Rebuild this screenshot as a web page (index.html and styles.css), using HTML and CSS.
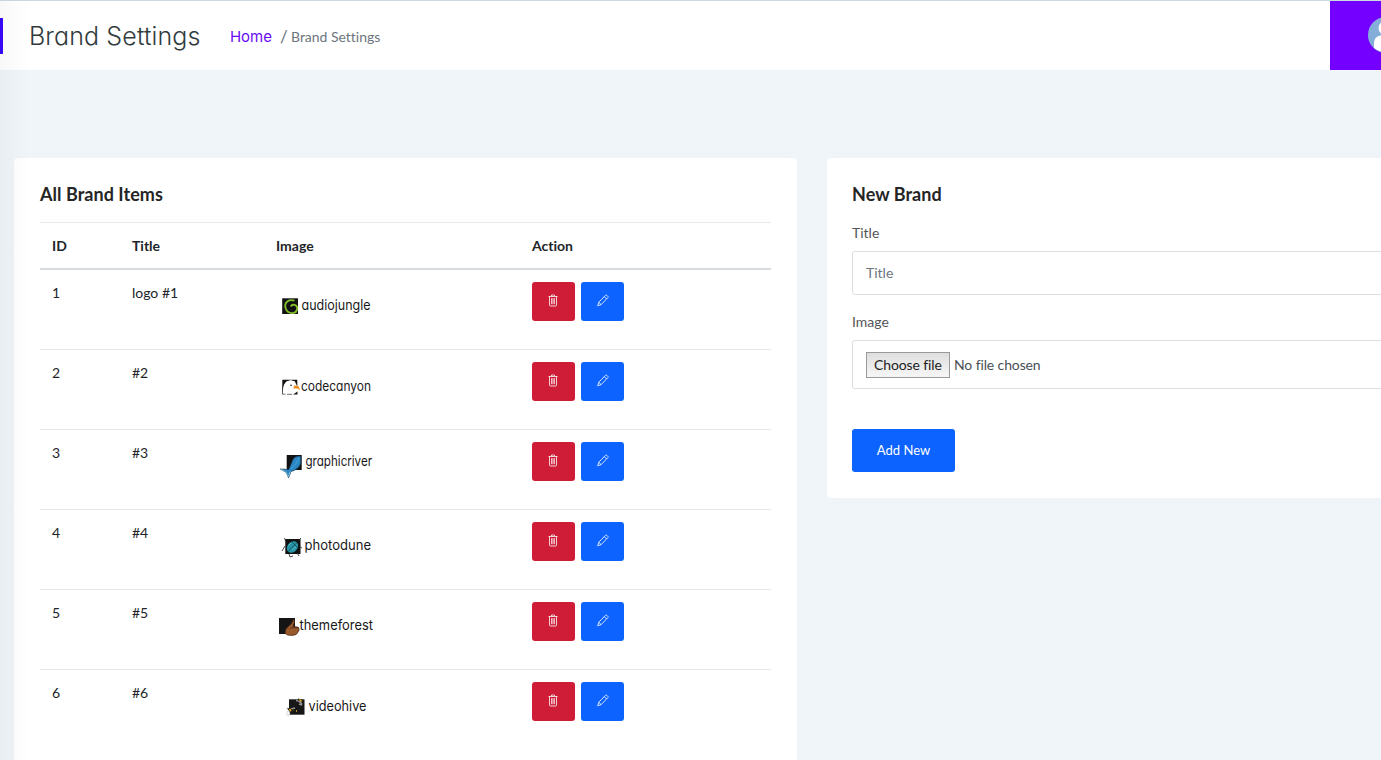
FILE: index.html
```html
<!DOCTYPE html>
<html lang="en">
<head>
<meta charset="utf-8">
<title>Brand Settings</title>
<link rel="stylesheet" href="styles.css">
</head>
<body>
<svg width="0" height="0" class="sprite" aria-hidden="true">
  <symbol id="trash" viewBox="0 0 10 14"><path d="M.5 2.5h9M3.5 2.3V1h3v1.3M1.5 2.5v8.7q0 .8.8.8h5.4q.8 0 .8-.8V2.500M3.600 4.200v6M5 4.200v6M6.400 4.200v6"/></symbol>
  <symbol id="pencil" viewBox="0 0 12 13"><path d="M.7 11.800l1-3.500L8.600 1.300q.6-.5 1.200 0l1.100 1.100q.5.600 0 1.200L4.100 10.600zM1.700 8.300l2.400 2.300M7.300 2.700l2.300 2.300"/></symbol>
</svg>
<div class="edge-shadow"></div>
<header class="topbar">
  <div class="marker"></div>
  <h1 class="page-title">Brand Settings</h1>
  <nav class="crumbs"><a class="home">Home</a><span class="slash">/</span><span class="here">Brand Settings</span></nav>
  <div class="profile">
    <svg class="avatar" width="36" height="36" viewBox="0 0 36 36"><circle cx="18" cy="18" r="18" fill="#85add9"/><circle cx="18" cy="11" r="7.500" fill="#fff"/><path d="M6 31V26q0-7 8-8h8q8 1 8 8v5q-5 4-12 4T6 31z" fill="#fff"/></svg>
  </div>
</header>
<main class="content">
  <section class="card items">
    <h2>All Brand Items</h2>
    <table>
      <thead><tr><th class="c-id">ID</th><th class="c-title">Title</th><th class="c-image">Image</th><th>Action</th></tr></thead>
      <tbody>
        <tr><td>1</td><td>logo #1</td><td><svg class="logo" viewBox="0 0 100 50"><rect x="6.200" y="16.300" width="15.800" height="15.700" fill="#111"/><path d="M18.500 18.700C11 16.300 7.800 22 9.900 27s10 6 11.200 0c.6-4.500-5-5.500-6.300-2.500" fill="none" stroke="#82bd2b" stroke-width="1.900"/><text x="25.500" y="28" textLength="69" lengthAdjust="spacingAndGlyphs">audiojungle</text></svg></td><td><div class="actions"><span class="btn del"><svg width="10" height="14"><use href="#trash"/></svg></span><span class="btn edit"><svg width="12" height="13"><use href="#pencil"/></svg></span></div></td></tr>
        <tr><td>2</td><td>#2</td><td><svg class="logo" viewBox="0 0 100 50"><path d="M6.300 17.800h15v7l-2.500-5.500-4-1-4 1-3 4-1.500 9zM17 32.500l4.500-3v3z" fill="#151515"/><path d="M7 31q0-8 3-11 5-3 8 0l2 6q-5 2-4 6z" fill="#fff"/><path d="M6.500 23v9.200h3M11 32.300h5" fill="none" stroke="#333" stroke-width=".7"/><circle cx="15" cy="23.300" r=".8" fill="#111"/><path d="M18.300 23.500l4 .5 2 4-3-1.500-4 .1z" fill="#ed8b1c"/><text x="25" y="29" textLength="70" lengthAdjust="spacingAndGlyphs">codecanyon</text></svg></td><td><div class="actions"><span class="btn del"><svg width="10" height="14"><use href="#trash"/></svg></span><span class="btn edit"><svg width="12" height="13"><use href="#pencil"/></svg></span></div></td></tr>
        <tr><td>3</td><td>#3</td><td><svg class="logo" viewBox="0 0 100 50"><rect x="10.700" y="13" width="15" height="15" fill="#111"/><path d="M24.800 14.200q-7-1-9 6l-3 7.300-8.500-.5 6 3.600 2.200 5.200 2.500-6.300q8-2 9.800-8.500z" fill="#2b86c5" stroke="#15364f" stroke-width=".7"/><path d="M14.800 27q6-5 8.300-11" fill="none" stroke="#53aede" stroke-width=".7"/><path d="M5 27.200l5 2.900 2.300 4.500 2-5.200" fill="none" stroke="#a3ddf2" stroke-width=".7"/><text x="29.500" y="24.300" textLength="66.500" lengthAdjust="spacingAndGlyphs">graphicriver</text></svg></td><td><div class="actions"><span class="btn del"><svg width="10" height="14"><use href="#trash"/></svg></span><span class="btn edit"><svg width="12" height="13"><use href="#pencil"/></svg></span></div></td></tr>
        <tr><td>4</td><td>#4</td><td><svg class="logo" viewBox="0 0 100 50"><rect x="9.300" y="17" width="15.200" height="15" fill="#111"/><path d="M9.500 19l-1-3M6 29l3-5M13 32l1 3 3-1M22 19l3-3M24 25l2 1M21 31l2 3" fill="none" stroke="#222" stroke-width=".8"/><ellipse cx="16.500" cy="25" rx="6.300" ry="5" transform="rotate(-45 16.500 25)" fill="#2794a6"/><path d="M12 29.500l9-9M15.500 19.500l6 6" fill="none" stroke="#0b3d49" stroke-width=".7"/><path d="M12 24l3-3M16 28l4-3" stroke="#66c7cf" stroke-width=".8"/><text x="28.500" y="28" textLength="66.500" lengthAdjust="spacingAndGlyphs">photodune</text></svg></td><td><div class="actions"><span class="btn del"><svg width="10" height="14"><use href="#trash"/></svg></span><span class="btn edit"><svg width="12" height="13"><use href="#pencil"/></svg></span></div></td></tr>
        <tr><td>5</td><td>#5</td><td><svg class="logo" viewBox="0 0 100 50"><rect x="3" y="16" width="16" height="16" fill="#151515"/><path d="M17.500 16.800q2 3-.5 7.500l5.500 1q1.500 2.700-.5 4.700-1 3-4.500 3.300-7 .5-8.300-2-.7-4 3.300-7 4-3 5-7.500z" fill="#9a592a" stroke="#3b2313" stroke-width=".7"/><path d="M14 26.500l2-.8h6" fill="none" stroke="#3b2313" stroke-width=".7"/><text x="23.500" y="27.500" textLength="73.500" lengthAdjust="spacingAndGlyphs">themeforest</text></svg></td><td><div class="actions"><span class="btn del"><svg width="10" height="14"><use href="#trash"/></svg></span><span class="btn edit"><svg width="12" height="13"><use href="#pencil"/></svg></span></div></td></tr>
        <tr><td>6</td><td>#6</td><td><svg class="logo" viewBox="0 0 100 50"><rect x="13" y="17.300" width="15.500" height="15.400" fill="#171717"/><path d="M20 18.500q4 0 6 4M26 23l-3-1M11 26l4 3M15 27l4-1" fill="none" stroke="#999" stroke-width="1.400"/><path d="M22 17.500l5 1.500M12 27l6 2" stroke="#2b2510" stroke-width="2"/><path d="M23.500 17.500l2 2M13.500 27l1.500 2M20 29h1" stroke="#eeb31c" stroke-width="1.500"/><ellipse cx="12.300" cy="31.300" rx="1.600" ry="2.300" fill="#fff" stroke="#aaa" stroke-width=".5"/><text x="32.500" y="29" textLength="58" lengthAdjust="spacingAndGlyphs">videohive</text></svg></td><td><div class="actions"><span class="btn del"><svg width="10" height="14"><use href="#trash"/></svg></span><span class="btn edit"><svg width="12" height="13"><use href="#pencil"/></svg></span></div></td></tr>
      </tbody>
    </table>
  </section>
  <section class="card create">
    <h2>New Brand</h2>
    <label>Title</label>
    <div class="field text-field">Title</div>
    <label>Image</label>
    <div class="field file-field"><span class="choose">Choose file</span><span>No file chosen</span></div>
    <span class="submit">Add New</span>
  </section>
</main>
</body>
</html>
```
FILE: styles.css
```css
* { box-sizing: border-box; }
body {
  margin: 0;
  height: 760px;
  overflow: hidden;
  background: #f0f5f9;
  font: 14px/21px Lato, sans-serif;
  color: #212529;
}
.sprite { position: absolute; }
.edge-shadow {
  position: absolute;
  z-index: 2;
  left: 0;
  top: 0;
  width: 30px;
  height: 760px;
  background: linear-gradient(90deg, rgba(0,0,0,.026), rgba(0,0,0,0));
}
.topbar {
  display: flex;
  height: 70px;
  align-items: center;
  background: #fff;
  border-top: 1px solid #cbdae2;
  overflow: hidden;
}
.marker { width: 3px; height: 36px; background: #3708f5; position: relative; z-index: 3; }
.page-title {
  margin: 0 0 0 26px;
  width: 175px;
  font: 300 25px/36px Inter, sans-serif;
  font-feature-settings: "cv11";
  letter-spacing: .12px;
  color: #313b3d;
  white-space: nowrap;
}
.crumbs { display: flex; align-items: center; flex: 1; margin: 1px 0 0 26px; color: #6c757d; font-variant-ligatures: none; }
.home { width: 42px; font: 400 15px/21px Inter, sans-serif; font-feature-settings: "cv11"; letter-spacing: -.05px; color: #6a0af5; }
.slash { width: 7px; font-size: 17px; margin: 0 4px 0 8px; }
.here { letter-spacing: -.02px; }
.profile { width: 51px; height: 69px; background: #7400ff; overflow: hidden; padding: 16px 0 0 38px; }
.avatar { display: block; }
.content { display: flex; gap: 30px; padding: 88px 0 0 14px; }
.card { flex: none; background: #fff; border-radius: 4px; box-shadow: 0 0 20px rgba(0,40,80,.01); }
.items { width: 783px; height: 640px; padding: 24px 26px; }
.create { width: 600px; height: 340px; padding: 24px 25px; }
h2 { margin: 0; font-size: 18px; font-weight: 700; line-height: 24px; letter-spacing: .04px; color: #252525; }
table { width: 731px; margin-top: 16px; border-spacing: 0; table-layout: fixed; }
th { height: 48px; padding: 0 12px; text-align: left; border-top: 1px solid #e7e9ec; border-bottom: 2px solid #d6dbe0; font-variant-ligatures: none; }
.c-id { width: 80px; }
.c-title { width: 144px; }
.c-image { width: 256px; }
td { height: 80px; padding: 12px 12px 0; vertical-align: top; border-top: 1px solid #e6e8eb; }
tbody tr:first-child td { height: 79px; border-top: 0; }
.logo { display: block; width: 100px; height: 50px; overflow: visible; }
.logo text { font: 400 14px Inter, sans-serif; font-feature-settings: "cv11"; fill: #171717; }
.actions { display: flex; gap: 6px; }
.btn { display: flex; width: 43px; height: 39px; border-radius: 3px; align-items: center; justify-content: center; padding-bottom: 2px; }
.btn svg, symbol { fill: none; stroke: #fff; stroke-width: .8; }
.del { padding-right: 1px; background: #cf1d38; }
.edit { background: #0c63ff; }
label { display: block; margin-top: 16px; color: #555; }
.field { display: flex; align-items: center; width: 560px; border: 1px solid #dcdee0; border-radius: 3px; padding-left: 13px; }
.text-field { height: 44px; margin-top: 8px; padding-bottom: 1px; color: #6c757d; }
.file-field { height: 49px; margin-top: 8px; gap: 4px; color: #495057; letter-spacing: -.12px; font-variant-ligatures: common-ligatures; }
.choose { width: 84px; height: 26px; padding: 1px 7px; border: 1px solid #9a9a9a; background: linear-gradient(#dedede, #f6f6f6); color: #222; line-height: 22px; white-space: nowrap; }
.submit { display: flex; align-items: center; justify-content: center; width: 103px; height: 43px; margin-top: 40px; padding-bottom: 1px; border-radius: 3px; background: #0c63ff; color: #fff; font-size: 13px; }
```
